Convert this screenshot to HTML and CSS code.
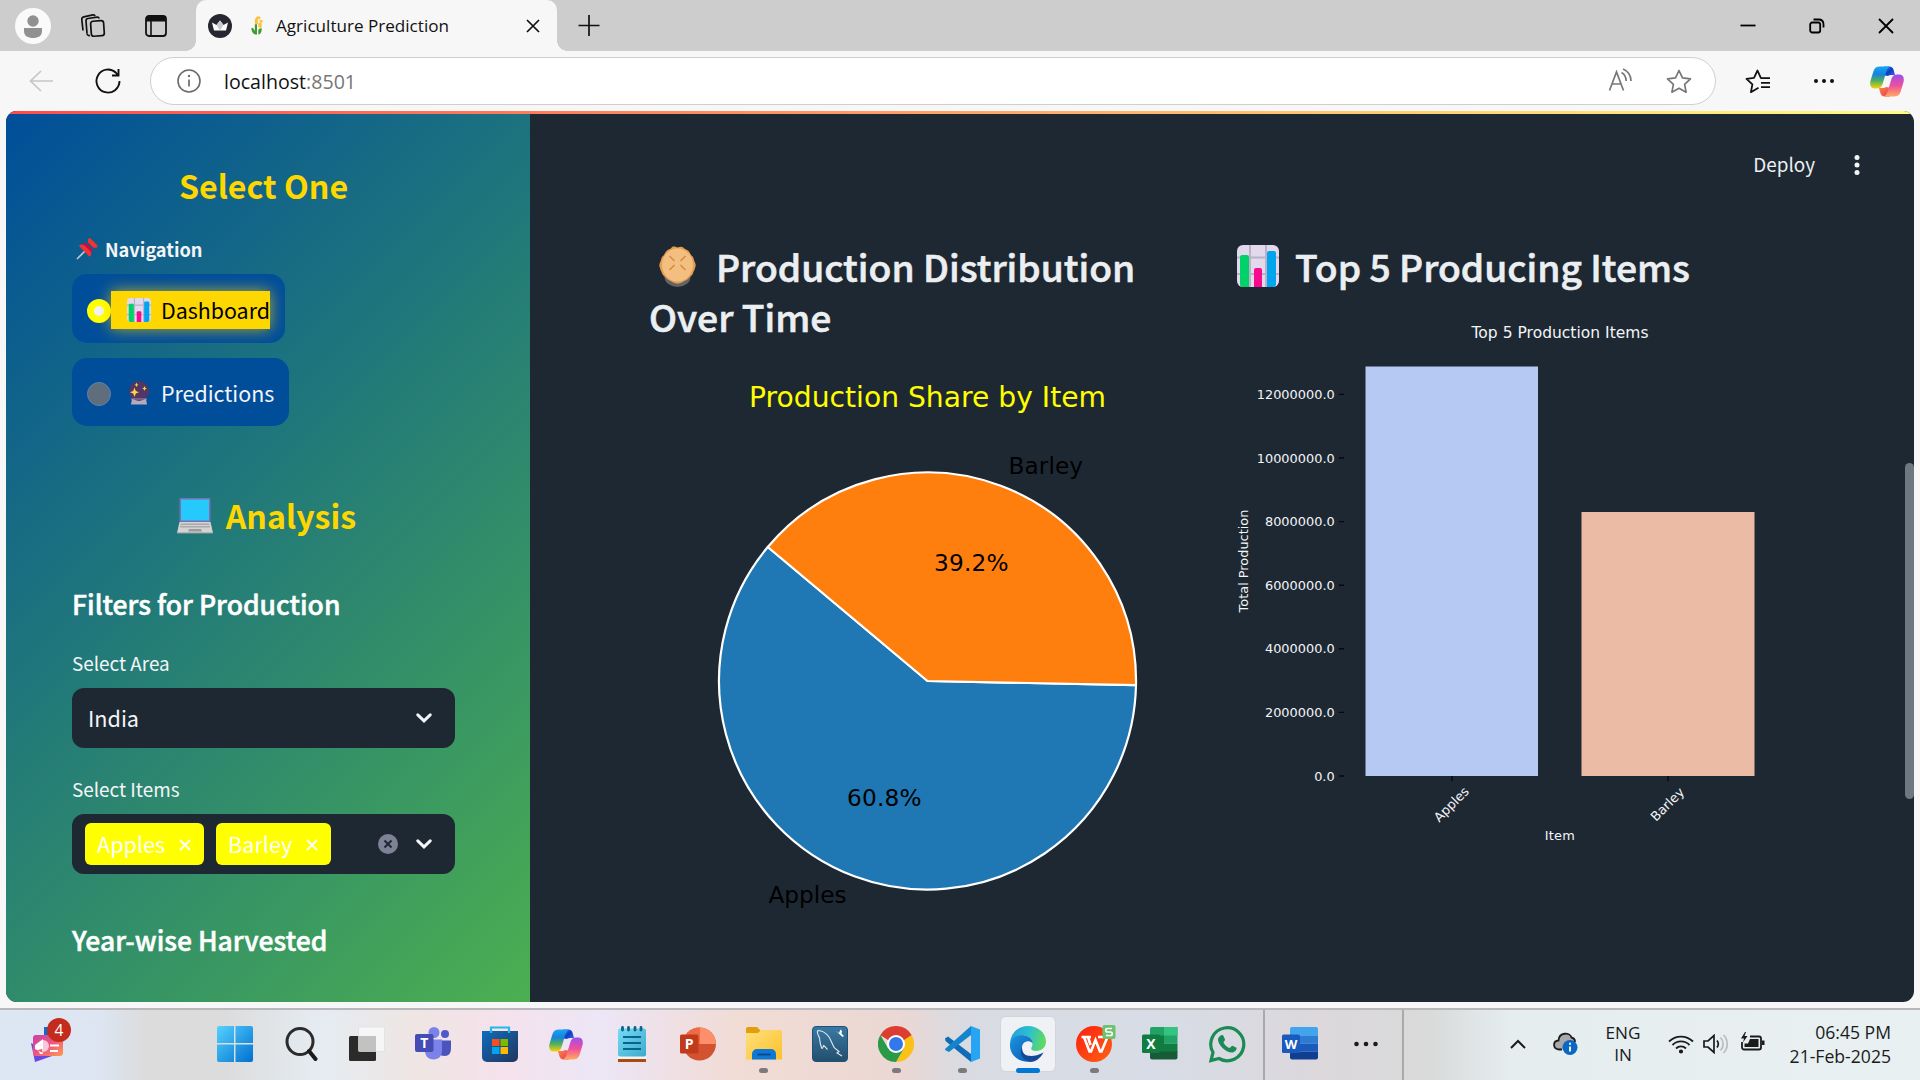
FILE: index.html
```html
<!DOCTYPE html>
<html lang="en">
<head>
<meta charset="utf-8">
<title>Agriculture Prediction</title>
<link rel="stylesheet" href="styles.css">
</head>
<body>
<svg class="defs" width="0" height="0" aria-hidden="true">
  <defs>
    <linearGradient id="cpA" x1="0" y1="0" x2="0" y2="1"><stop offset="0" stop-color="#18a4f5"/><stop offset=".35" stop-color="#1583dc"/><stop offset=".65" stop-color="#4fb05c"/><stop offset="1" stop-color="#fbd008"/></linearGradient>
    <linearGradient id="cpB" x1="0" y1="0" x2="0" y2="1"><stop offset="0" stop-color="#9a4ff0"/><stop offset=".5" stop-color="#ee4f9c"/><stop offset="1" stop-color="#ffab5c"/></linearGradient>
    <linearGradient id="cpC" x1="0" y1="0" x2="1" y2="1"><stop offset="0" stop-color="#1ba7ea"/><stop offset=".5" stop-color="#1239c4"/><stop offset="1" stop-color="#2f6fe6"/></linearGradient>
    <linearGradient id="cpD" x1="0" y1="0" x2="1" y2="1"><stop offset="0" stop-color="#ff8a3c"/><stop offset="1" stop-color="#e6355b"/></linearGradient>
    <symbol id="copilot" viewBox="0 0 34 30">
      <path fill="url(#cpC)" d="M14 0H19C22 0 23 1.200 23.800 4L25 8.500H22.500C20.500 8.500 19 8.500 18 9.500L15 9Z"/>
      <path fill="url(#cpD)" d="M20 30H15C12 30 11 28.800 10.200 26L9 21.500H11.500C13.500 21.500 15 21.500 16 20.500L19 21Z"/>
      <path fill="url(#cpA)" d="M10 0H20C18 1 17 3 16.200 5.500L12.600 17.500C11.600 20.800 9.800 22 6.500 22H5C1 22-.700 19 .600 14L3.500 4.500C4.600 1.200 6.500 0 10 0Z"/>
      <path fill="url(#cpB)" d="M24 30H14C16 29 17 27 17.800 24.500L21.400 12.500C22.400 9.200 24.200 8 27.500 8H29C33 8 34.700 11 33.400 16L30.500 25.500C29.400 28.800 27.500 30 24 30Z"/>
    </symbol>
    <symbol id="barchart" viewBox="0 0 42 42">
      <rect width="42" height="42" rx="6" fill="#e3d9ec"/>
      <path d="M13 0V42M29 0V42M0 12.500H42M0 29H42" stroke="#bbb1c8" stroke-width="2"/>
      <path d="M3 12a2 2 0 0 1 2-2h5a2 2 0 0 1 2 2V42H6a3 3 0 0 1-3-3Z" fill="#00d26a"/>
      <path d="M17 25a2 2 0 0 1 2-2h4a2 2 0 0 1 2 2V42H17Z" fill="#f70a8d"/>
      <path d="M30 8a2 2 0 0 1 2-2h5a2 2 0 0 1 2 2V39a3 3 0 0 1-3 3H30Z" fill="#00a6ed"/>
    </symbol>
  </defs>
</svg>

<header class="tabstrip">
  <svg class="profile" width="36" height="36" viewBox="0 0 36 36"><circle cx="18" cy="18" r="18" fill="#fafafa"/><circle cx="18" cy="13" r="5.700" fill="#919191"/><path d="M9 20h18v3c0 5-4 7-9 7s-9-2-9-7Z" fill="#919191"/></svg>
  <svg class="workspaces" width="26" height="26" viewBox="0 0 26 26" fill="none" stroke="#111" stroke-width="1.700"><rect x="11" y="8" width="13" height="15" rx="2.500" transform="rotate(-4 17 16)"/><path d="M7 20.500 6 8c-.1-1.500.6-2.300 2-2.500l9-1.300c1.200-.2 1.800.2 2.200 1.300"/><path d="M3 17.500 1.800 6.500c-.1-1.500.6-2.300 2-2.600l9-2c1.200-.2 2 .2 2.200 1.200M7 20.500c0 1.300 1.500 2.300 3 2"/></svg>
  <svg class="vtabs" width="22" height="22" viewBox="0 0 22 22"><rect x="1" y="1" width="20" height="20" rx="3" fill="none" stroke="#111" stroke-width="1.800"/><path d="M1 6.500V4a3 3 0 0 1 3-3h14a3 3 0 0 1 3 3v2.500Z" fill="#111"/><path d="M6 6v15" stroke="#111" stroke-width="1.600"/></svg>
  <div class="tab">
    <svg width="24" height="24" viewBox="0 0 24 24"><circle cx="12" cy="12" r="12" fill="#262730"/><path d="M4 8.500 8.500 11 12 6.500 15.500 11 20 8.500 18 16.500H6Z" fill="#fff"/><path d="M8.500 11 12 6.500 15.500 11 12 16.500Z" fill="#c9c9cf"/></svg>
    <svg class="corn" width="12" height="20" viewBox="0 0 14 22"><g fill="#f9c23c"><rect x="4.500" y="2" width="3.500" height="7" rx="1.500"/><rect x="8.500" y="7" width="4" height="6" rx="1.500"/><rect x="6" y="0" width="5" height="3" rx="1"/><rect x="10" y="4" width="3.500" height="3" rx="1"/></g><path d="M5 21C1 19 .500 16 .500 13c2 0 3.500 2 4 4V9H7v12ZM8.500 21v-5c.5-2 2.500-2.500 4-2.500C12.500 17 12 20 8.500 21Z" fill="#3f9a2f"/></svg>
    <span class="tab-title">Agriculture Prediction</span>
    <svg class="tab-close" width="14" height="14" viewBox="0 0 14 14"><path d="M1 1 13 13M13 1 1 13" stroke="#111" stroke-width="1.700"/></svg>
  </div>
  <svg class="newtab" width="22" height="22" viewBox="0 0 22 22"><path d="M11 0V21M.500 10.500H21.500" stroke="#111" stroke-width="1.700"/></svg>
  <div class="winbtns">
    <svg width="16" height="16" viewBox="0 0 16 16"><path d="M.500 7.500H15.500" stroke="#000" stroke-width="1.800"/></svg>
    <svg width="16" height="16" viewBox="0 0 16 16" fill="none" stroke="#000" stroke-width="1.800"><rect x="1.200" y="4.500" width="10" height="10" rx="2"/><path d="M4.500 1.500H9.500C13 1.500 14.500 3 14.500 6.500V9.500"/></svg>
    <svg width="16" height="16" viewBox="0 0 16 16"><path d="M1 1 15 15M15 1 1 15" stroke="#000" stroke-width="1.800"/></svg>
  </div>
</header>

<nav class="toolbar">
  <svg class="back" width="24" height="22" viewBox="0 0 24 22" fill="none" stroke="#c6c6c6" stroke-width="1.700"><path d="M12 1 1.500 11 12 21M1.500 11H24"/></svg>
  <svg class="reload" width="26" height="26" viewBox="0 0 26 26" fill="none" stroke="#111" stroke-width="1.900"><path d="M24.500 13A11.500 11.500 0 1 1 21 4.800L23 7.500M23.500 1V7.500H17"/></svg>
  <div class="address">
    <svg width="24" height="24" viewBox="0 0 24 24"><circle cx="12" cy="12" r="11" fill="none" stroke="#6b6b6b" stroke-width="1.600"/><path d="M12 10.500V17.500" stroke="#6b6b6b" stroke-width="1.700"/><circle cx="12" cy="7" r="1.200" fill="#6b6b6b"/></svg>
    <span class="url">localhost<span class="port">:8501</span></span>
    <svg class="read" width="24" height="24" viewBox="0 0 24 24" fill="none" stroke="#777" stroke-width="1.700"><path d="M1.500 22.500 8.500 4 15.500 22.500M4 16H13M13.500 4.500C16.500 6 18 9 18.200 13M15 1C20 3 22.800 7 23 13"/></svg>
    <svg class="star" width="26" height="25" viewBox="0 0 26 25"><path d="M13 1.500 16.500 8.800 24.500 9.800 18.600 15.300 20.100 23.200 13 19.300 5.900 23.200 7.400 15.300 1.500 9.800 9.500 8.800Z" fill="none" stroke="#777" stroke-width="1.700" stroke-linejoin="round"/></svg>
  </div>
  <svg class="favs" width="26" height="25" viewBox="0 0 26 25" fill="none" stroke="#111" stroke-width="1.800" stroke-linejoin="round"><path d="M16.500 8.800H15.800L12.500 1.500 9 8.800 1.500 9.800 7.400 15.300 5.900 23.200 13.500 18.800M16 9.200H25M16 13.800H25M16 18.200H25"/></svg>
  <svg class="more" width="20" height="6" viewBox="0 0 20 6" fill="#111"><circle cx="2" cy="3" r="2"/><circle cx="10" cy="3" r="2"/><circle cx="18" cy="3" r="2"/></svg>
  <svg class="copilot-btn" width="34" height="31"><use href="#copilot"/></svg>
</nav>

<div class="viewport">
  <div class="decoration"></div>
  <aside class="sidebar">
    <h1 class="side-title">Select One</h1>
    <div class="nav-label">
      <svg width="22" height="22" viewBox="0 0 22 22"><path d="M10 12 1 21" stroke="#c5cbd6" stroke-width="1.600"/><path d="M9.500 4.500 17 12 13 17 4.500 8.500Z" fill="#ca0b4a"/><path d="M12 1C13 0 14 0 15 1L21 7C22 8 21.500 9.500 20 9.800L17.500 9.800 12 4.500ZM3 8C3.500 6.500 6 6 8 7L14.500 13.500C15.500 16 15 18 13.500 18.700Z" fill="#f8312f"/></svg>
      <span>Navigation</span>
    </div>
    <div class="radio active">
      <span class="dot"></span>
      <span class="radio-text"><svg width="24" height="24"><use href="#barchart"/></svg>Dashboard</span>
    </div>
    <div class="radio">
      <span class="dot"></span>
      <span class="radio-text"><svg width="24" height="24" viewBox="0 0 24 24"><path d="M5 18H19L20 23.500H4Z" fill="#b4acbc"/><circle cx="12" cy="10" r="10" fill="#533566"/><path d="M4 18.500H20V17.500H4Z" fill="#998ea4"/><path d="M7.500 6.500 8.800 10 12 11.200 8.800 12.500 7.500 16 6.200 12.500 3 11.200 6.200 10ZM9.500 1.500 10.200 3.300 11.500 4 10.200 4.600 9.500 6 8.800 4.600 7.500 4 8.800 3.300ZM17.500 5 18.200 6.800 19.800 7.500 18.200 8.200 17.500 10 16.800 8.200 15.200 7.500 16.800 6.800Z" fill="#fcd53f"/></svg>Predictions</span>
    </div>
    <h1 class="side-title analysis">
      <svg width="36" height="36" viewBox="0 0 36 36"><rect x="2.500" y="0" width="31" height="24" rx="1" fill="#7d6fb5"/><rect x="4" y="1.500" width="28" height="21" fill="#26c9fc"/><path d="M2.500 24H33.500L36 35H0Z" fill="#d3d3d3"/><path d="M4 25.500H32L33 29.500H3Z" fill="#aaa"/><path d="M4 27.500H32" stroke="#d3d3d3"/><path d="M12 31H24L25 33.500H11Z" fill="#9b9b9b"/><path d="M0 34.500H36V35.500H0Z" fill="#999"/></svg>
      <span>Analysis</span>
    </h1>
    <h3 class="filters">Filters for Production</h3>
    <label class="field-label">Select Area</label>
    <div class="select">
      <span class="value">India</span>
      <svg class="chev" width="16" height="10" viewBox="0 0 16 10"><path d="M1.800 1.800 8 7.800 14.200 1.800" fill="none" stroke="#f3f5f7" stroke-width="3" stroke-linecap="round"/></svg>
    </div>
    <label class="field-label items">Select Items</label>
    <div class="select">
      <span class="tag">Apples<svg width="12" height="12" viewBox="0 0 12 12"><path d="M1 1 11 11M11 1 1 11" stroke="#fff" stroke-width="2"/></svg></span>
      <span class="tag">Barley<svg width="12" height="12" viewBox="0 0 12 12"><path d="M1 1 11 11M11 1 1 11" stroke="#fff" stroke-width="2"/></svg></span>
      <svg class="clear" width="20" height="20" viewBox="0 0 20 20"><circle cx="10" cy="10" r="10" fill="#7f8297"/><path d="M6.500 6.500 13.500 13.500M13.500 6.500 6.500 13.500" stroke="#1e2833" stroke-width="2"/></svg>
      <svg class="chev" width="16" height="10" viewBox="0 0 16 10"><path d="M1.800 1.800 8 7.800 14.200 1.800" fill="none" stroke="#f3f5f7" stroke-width="3" stroke-linecap="round"/></svg>
    </div>
    <h3 class="year">Year-wise Harvested</h3>
  </aside>

  <main class="main">
    <div class="app-header">
      <span>Deploy</span>
      <svg width="6" height="20" viewBox="0 0 6 20" fill="#f3f5f7"><circle cx="3" cy="2.500" r="2.500"/><circle cx="3" cy="10" r="2.500"/><circle cx="3" cy="17.500" r="2.500"/></svg>
    </div>
    <div class="columns">
      <section>
        <h2><svg class="cookie" width="37" height="41" viewBox="0 0 37 41"><ellipse cx="18.500" cy="31" rx="13" ry="10" fill="#636363"/><path d="M13 1C15 0 17 1 18.500 1.500 20 1 22 0 24 1.200 25 3 27 3 29 4.500 31 6 31 8 32.500 9.500 35 11 34.500 13 35.500 15.500 37 18 37 20 36 22 36 24 34.500 25 34 27.500 33 30 30 31 29 33 27 35 25 34.500 23 36.500 20 38 17 38 14 36.500 12 34.500 10 35 8 33 7 31 4 30 3 27.500 2.500 25 1 24 1 22 0 20 0 18 1.500 15.500 2.500 13 2 11 4.500 9.500 6 8 6 6 8 4.500 10 3 12 3 13 1Z" fill="#e39d4f"/><ellipse cx="18.500" cy="19" rx="15.500" ry="16.500" fill="#f3bf80"/><path d="M10.500 10 15.500 15M26.500 10 21.500 15M10.500 24 15.500 19M26.500 24 21.500 19" stroke="#d98c3f" stroke-width="1.600"/></svg>Production Distribution<br>Over Time</h2>
        <svg class="chart" width="520" height="560" viewBox="650 360 520 560">
          <text class="pie-title" x="927.500" y="407" text-anchor="middle" textLength="357">Production Share by Item</text>
          <g stroke="#fff" stroke-width="2.200" stroke-linejoin="round">
            <path fill="#1f77b4" d="M927.500 681 767.800 547A208.500 208.500 0 1 0 1136 685.100Z"/>
            <path fill="#ff7f0e" d="M927.500 681 1136 685.100A208.500 208.500 0 0 0 767.800 547Z"/>
          </g>
          <g class="pie-label">
            <text x="1008.500" y="474" textLength="74.500">Barley</text>
            <text x="768.500" y="903" textLength="78">Apples</text>
            <text x="934" y="571" textLength="74.500">39.2%</text>
            <text x="847" y="805.500" textLength="74.500">60.8%</text>
          </g>
        </svg>
      </section>
      <section>
        <h2><svg width="42" height="42"><use href="#barchart"/></svg>Top 5 Producing Items</h2>
        <svg class="chart bars" width="540" height="540" viewBox="1230 310 540 540">
          <text class="bar-title" x="1560" y="338" text-anchor="middle" textLength="177">Top 5 Production Items</text>
          <rect x="1365.500" y="366.500" width="172.500" height="409.500" fill="#b5c9f3"/>
          <rect x="1581.500" y="512" width="173" height="264" fill="#ecbba5"/>
          <path d="M1339 776h5M1339 712.400h5M1339 648.800h5M1339 585.200h5M1339 521.600h5M1339 458h5M1339 394.400h5M1452 776v5M1668 776v5" stroke="#05080b" stroke-width="1.400"/>
          <g class="tick" text-anchor="end">
            <text x="1334.700" y="780.500">0.0</text><text x="1334.700" y="717">2000000.0</text><text x="1334.700" y="653.400">4000000.0</text><text x="1334.700" y="589.800">6000000.0</text><text x="1334.700" y="526.200">8000000.0</text><text x="1334.700" y="462.600">10000000.0</text><text x="1334.700" y="399">12000000.0</text>
          </g>
          <g class="tick" text-anchor="middle">
            <text transform="translate(1454.500 807.500) rotate(-45)">Apples</text>
            <text transform="translate(1670.500 807.500) rotate(-45)">Barley</text>
            <text x="1559.700" y="839.500" textLength="30">Item</text>
            <text transform="translate(1248 561) rotate(-90)">Total Production</text>
          </g>
        </svg>
      </section>
    </div>
    <div class="scrollbar"></div>
  </main>
</div>

<footer class="taskbar">
  <div class="cell news"><svg width="36" height="38" viewBox="0 0 36 38"><path d="M2 18 6 37 26 30Z" fill="#6a48e0"/><rect x="15" y="2" width="14" height="20" fill="#1269c7"/><defs><linearGradient id="nw" x1="0" y1="0" x2="1" y2="1"><stop offset="0" stop-color="#c542a6"/><stop offset=".5" stop-color="#f0557f"/><stop offset="1" stop-color="#ff9a52"/></linearGradient></defs><rect x="4" y="10" width="30" height="21" rx="3" fill="url(#nw)"/><path d="M6 20 14 14V28L6 24ZM9 25 11 29H14L13 24Z" fill="#fff"/><path d="M14 15a6 6 0 0 1 0 12Z" fill="#f9c6da"/><path d="M21 20.500H30M21 26H29" stroke="#fff" stroke-width="2"/></svg><span class="badge">4</span></div>
  <div class="apps">
    <div class="cell"><svg width="36" height="36" viewBox="0 0 36 36"><defs><linearGradient id="wn" x1="0" y1="0" x2="1" y2="1"><stop offset="0" stop-color="#56d2ff"/><stop offset="1" stop-color="#0070cf"/></linearGradient></defs><path fill="url(#wn)" d="M2 0H17V17H0V2a2 2 0 0 1 2-2ZM18.500 0H34a2 2 0 0 1 2 2V17H18.500ZM0 18.500H17V36H2a2 2 0 0 1-2-2ZM18.500 18.500H36V34a2 2 0 0 1-2 2H18.500Z"/></svg></div>
    <div class="cell"><svg width="34" height="36" viewBox="0 0 34 36"><circle cx="16" cy="15.500" r="13" fill="none" stroke="#2b2b2b" stroke-width="3"/><path d="M25 25 31.500 33" stroke="#1b1b1b" stroke-width="4" stroke-linecap="round"/></svg></div>
    <div class="cell"><svg width="36" height="36" viewBox="0 0 36 36"><rect x="0" y="10" width="27" height="25" rx="1.500" fill="#2b2b2a"/><rect x="9.500" y="1" width="26" height="24.500" rx="1.500" fill="#f6f6f6" stroke="#dcdcdc" stroke-width=".6"/><rect x="9.500" y="10" width="17.500" height="15.500" fill="#c2c2c2"/></svg></div>
    <div class="cell"><svg width="36" height="36" viewBox="0 0 36 36"><circle cx="30" cy="8" r="4" fill="#5059c9"/><path d="M22 14.500H36V22c0 5-2 8-6.500 8S22 27 22 22Z" fill="#4b53bc"/><circle cx="19" cy="6.500" r="5.500" fill="#7b83eb"/><path d="M10 13.500H27V24c0 6-3 9.500-8.500 9.500S10 30 10 24Z" fill="#7b83eb"/><rect x="0" y="8" width="18.500" height="18" rx="2" fill="#454cb5"/><text class="glyph" x="9.200" y="22" font-size="14">T</text></svg></div>
    <div class="cell"><svg width="36" height="36" viewBox="0 0 36 36"><defs><linearGradient id="st" x1="0" y1="0" x2="1" y2="1"><stop offset="0" stop-color="#0f6cbd"/><stop offset="1" stop-color="#22355c"/></linearGradient></defs><path d="M0 5H36V31a5 5 0 0 1-5 5H5a5 5 0 0 1-5-5Z" fill="url(#st)"/><path d="M9 7V1.500H27V7" fill="none" stroke="#22b8ee" stroke-width="2.200"/><path d="M10 13h7.500v7H10Z" fill="#f25022"/><path d="M18.500 13H26v7h-7.500Z" fill="#7fba00"/><path d="M10 21h7.500v7H10Z" fill="#00a4ef"/><path d="M18.500 21H26v7h-7.500Z" fill="#ffb900"/></svg></div>
    <div class="cell"><svg width="34" height="31"><use href="#copilot"/></svg></div>
    <div class="cell"><svg width="28" height="36" viewBox="0 0 28 36"><path d="M0 30H28V36H0Z" fill="#ad4b0e"/><path d="M0 30H28V33H0Z" fill="#f0f4f6"/><defs><linearGradient id="np" x1="0" y1="0" x2="1" y2="1"><stop offset="0" stop-color="#77dcf5"/><stop offset="1" stop-color="#3da9cb"/></linearGradient></defs><rect y="2.500" width="28" height="28" rx="2" fill="url(#np)"/><path d="M5 11H23M5 17H23M5 23H23" stroke="#07648c" stroke-width="2"/><path d="M4.500 1.500V4M10.500 1.500V4M17 1.500V4M23 1.500V4" stroke="#07648c" stroke-width="2.800" stroke-linecap="round"/></svg></div>
    <div class="cell"><svg width="36" height="34" viewBox="0 0 36 34"><circle cx="19.500" cy="17" r="16.500" fill="#d35230"/><path d="M19.500 17V.500A16.500 16.500 0 0 1 36 17Z" fill="#ff8f6b"/><path d="M19.500.500V17H3A16.500 16.500 0 0 1 19.500.500Z" fill="#ed6c47"/><rect y="7.500" width="18.500" height="19" rx="1.500" fill="#c13b1b"/><text class="glyph" x="9.200" y="22" font-size="14">P</text></svg></div>
    <div class="cell running"><svg width="36" height="34" viewBox="0 0 36 34"><path d="M0 2a2 2 0 0 1 2-2H11L15 4V10H0Z" fill="#dfa00a"/><defs><linearGradient id="fd" x1="0" y1="0" x2="1" y2="1"><stop offset="0" stop-color="#ffe07a"/><stop offset="1" stop-color="#fcc02c"/></linearGradient></defs><path d="M0 6H12L15 3H34a2 2 0 0 1 2 2V32.500H0Z" fill="url(#fd)"/><path d="M6 32.500V27a5 5 0 0 1 5-5H25a5 5 0 0 1 5 5V32.500Z" fill="#0f78d4"/><path d="M11.500 27.500H24.500" stroke="#0a4a8c" stroke-width="2"/></svg></div>
    <div class="cell"><svg width="36" height="36" viewBox="0 0 36 36"><defs><linearGradient id="my" x1="0" y1="0" x2="0" y2="1"><stop offset="0" stop-color="#3a79a4"/><stop offset="1" stop-color="#234e6c"/></linearGradient></defs><rect x=".500" y=".500" width="35" height="35" rx="3.500" fill="url(#my)" stroke="#1f5274"/><path d="M6 4.500C10 4.500 14 7 17 11 19 14 20 18 22.500 22L27 25.500 25 27 30 30M6 4.500C4 6 6.500 9 7.500 12 8 15 8 18 9.500 21.500 10 23.500 11 22 11.500 19.500 13 20 14 22 15.500 23.500" fill="none" stroke="#dfe9f0" stroke-width="1.100"/><path d="M24 5 27 7 28.500 3.500 30 5 29.500 7.500 32 10 30.500 11Z" fill="#fff"/></svg></div>
    <div class="cell running"><svg width="36" height="36" viewBox="0 0 36 36"><path d="M18 18 2.400 9A18 18 0 0 1 33.600 9Z" fill="#dd3c30"/><path d="M33.600 9A18 18 0 0 1 18 36L25.800 22.500 18 9Z" fill="#fbc116"/><path d="M2.400 9A18 18 0 0 0 18 36L25.800 22.500H10.200Z" fill="#289a48"/><path d="M2.400 9H33.600L26 14H10Z" fill="#dd3c30"/><circle cx="18" cy="18" r="9" fill="#fff"/><circle cx="18" cy="18" r="7" fill="#3278ea"/></svg></div>
    <div class="cell running"><svg width="36" height="36" viewBox="0 0 36 36"><path d="M1 12.500 4 10.500 27 28V36L1.500 15Z" fill="#0f6cb5"/><path d="M1.500 22.500 27 0V9L5 26 1 24Z" fill="#1484ce"/><path d="M27 0 36 3.500V32.500L27 36Z" fill="#27a5f2"/></svg></div>
    <div class="cell running current"><svg width="36" height="36" viewBox="0 0 36 36"><defs><linearGradient id="e1" x1="0" y1=".3" x2="1" y2=".5"><stop offset="0" stop-color="#239fd8"/><stop offset=".5" stop-color="#2bc1cf"/><stop offset="1" stop-color="#62db5d"/></linearGradient><linearGradient id="e2" x1="0" y1="0" x2="1" y2="1"><stop offset="0" stop-color="#1a95e2"/><stop offset="1" stop-color="#0c56ab"/></linearGradient></defs><path d="M0 17C1 7 8 0 18 0 28 0 36 7 36 15.500 36 21 32 25 26 25 22 25 20.500 23 21.500 21.500 24 18 22 10 13 9 7 9 2 12 0 17Z" fill="url(#e1)"/><path d="M0 18C1 11 7 9 12 9 18 9 23 13 22.500 18 22 14 12 14 12 22 12 29 18 35 25 34.500 14 39-1 32 0 18Z" fill="url(#e2)"/><path d="M12 21C11 30 21 33 33.500 26.500 30 33 25 36 20 36 12 33 9 27 12 21Z" fill="#124a98"/></svg></div>
    <div class="cell running"><svg class="wps" width="40" height="40" viewBox="0 0 40 40"><defs><linearGradient id="wp" x1="0" y1="0" x2="1" y2="1"><stop offset="0" stop-color="#fb1f12"/><stop offset="1" stop-color="#ff6212"/></linearGradient></defs><circle cx="18" cy="22" r="18" fill="url(#wp)"/><path d="M5.500 15H15M8 15 13.500 29.500H15L19.500 18 24 29.500H25.500L31.500 15H22M12 15 14.500 23" fill="none" stroke="#fff" stroke-width="2.600"/><rect x="26.500" y="3" width="13" height="14" rx="2" fill="#6cc26e"/><path d="M36 6.500H31.500A1.500 1.500 0 0 0 31.500 10H34.500A1.500 1.500 0 0 1 34.500 13.500H30" fill="none" stroke="#fff" stroke-width="1.700"/></svg></div>
    <div class="cell"><svg width="36" height="34" viewBox="0 0 36 34"><path d="M8 2a2 2 0 0 1 2-2H35.500V16.500H8Z" fill="#21a366"/><path d="M22 0H33.500a2 2 0 0 1 2 2V8.500H22Z" fill="#33c481"/><path d="M8 8.500H22V25H8Z" fill="#107c41"/><path d="M22 16.500H35.500V25H22Z" fill="#107c41"/><path d="M8 24.500H35.500V30.500a2 2 0 0 1-2 2H10a2 2 0 0 1-2-2Z" fill="#185c37"/><rect y="7.500" width="18" height="18.500" rx="1.500" fill="#107c41"/><text class="glyph" x="9" y="22" font-size="14">X</text></svg></div>
    <div class="cell"><svg width="38" height="38" viewBox="0 0 38 38"><path d="M3 35.500 5 27.500A16.500 16.500 0 1 1 11 33.500Z" fill="none" stroke="#1c8a54" stroke-width="3.200"/><path d="M12 11C13.500 9.500 15 10 15.500 11L17 14.500C17 16 15.500 16.500 15.500 17.500 17 20.500 19 22 21.500 23 22.500 23 23.500 20.800 24.500 20.800L28.500 22.800C29 25 27 27 24.500 27.500 18 28 10 20 10 14.500 10 13 11 12 12 11Z" fill="#1c8a54"/></svg></div>
  </div>
  <div class="pinned">
    <svg width="36" height="34" viewBox="0 0 36 34"><path d="M8 2a2 2 0 0 1 2-2H34a2 2 0 0 1 2 2V8.500H8Z" fill="#41a5ee"/><path d="M8 8.500H36V16.500H8Z" fill="#2b7cd3"/><path d="M8 16.500H36V24.500H8Z" fill="#185abd"/><path d="M8 24.500H36V30.500a2 2 0 0 1-2 2H10a2 2 0 0 1-2-2Z" fill="#103f91"/><rect y="7.500" width="18" height="18.500" rx="1.500" fill="#185abd"/><text class="glyph" x="9" y="21.500" font-size="13">W</text></svg>
    <svg width="24" height="6" viewBox="0 0 24 6" fill="#1b1b1b"><circle cx="2.500" cy="3" r="2.300"/><circle cx="12" cy="3" r="2.300"/><circle cx="21.500" cy="3" r="2.300"/></svg>
  </div>
  <div class="tray">
    <svg class="caret" width="16" height="10" viewBox="0 0 16 10"><path d="M1 9 8 2 15 9" fill="none" stroke="#1b1b1b" stroke-width="2"/></svg>
    <svg class="cloud" width="25" height="24" viewBox="0 0 25 24"><path d="M9 17.500H6C-.500 17-.500 9 5.500 8.500 6 0 17 0 18.500 5.500 21 6 22 8 22 10" fill="#a9a9a9"/><path d="M9 17.500H6C-.500 17-.500 9 5.500 8.500 6 0 17 0 18.500 5.500 21 6 22 8 22 10" fill="none" stroke="#1b1b1b" stroke-width="1.800"/><circle cx="17" cy="15.500" r="7.500" fill="#0a67c2"/><path d="M17 14.500v5M17 10.800v2" stroke="#fff" stroke-width="1.800"/></svg>
    <div class="lang">ENG<br>IN</div>
    <svg class="wifi" width="26" height="20" viewBox="0 0 26 20" fill="none" stroke="#1b1b1b" stroke-width="1.800"><path d="M1 7.500A17 17 0 0 1 25 7.500M4.500 11A12 12 0 0 1 21.500 11M8 14.500A7 7 0 0 1 18 14.500"/><circle cx="13" cy="17.500" r="1.200" fill="#1b1b1b"/></svg>
    <svg class="sound" width="26" height="20" viewBox="0 0 26 20" fill="none" stroke="#1b1b1b" stroke-width="1.700"><path d="M1 7H5L11 1.500V18.500L5 13H1ZM14 6.500C15.500 8.500 15.500 11.500 14 13.500"/><path d="M17.500 3.500C21 7 21 13 17.500 16.500M20.500 1C25.500 6 25.500 14 20.500 19" stroke="#b9bdbf"/></svg>
    <svg class="batt" width="25" height="20" viewBox="0 0 25 20"><path d="M10 4.500H19a2 2 0 0 1 2 2v9a2 2 0 0 1-2 2H4a2 2 0 0 1-2-2V10" fill="none" stroke="#1b1b1b" stroke-width="1.800"/><path d="M22 8.500H24.500V13H22Z" fill="#1b1b1b"/><path d="M10 7H18.500V15H4.500V11.500H8Z" fill="#1b1b1b"/><path d="M5 0 1 6.500H4L3 10.500 7.500 4H4.500L6 0Z" fill="#1b1b1b"/></svg>
    <div class="clock">06:45 PM<br>21-Feb-2025</div>
  </div>
</footer>
</body>
</html>
```
FILE: styles.css
```css
* { box-sizing: border-box; }
body {
  margin: 0;
  width: 1920px;
  height: 1080px;
  overflow: hidden;
  display: flex;
  flex-direction: column;
  background: #f7f7f7;
  font-family: "Noto Sans CJK JP", "Noto Sans", sans-serif;
}
svg { display: block; flex: none; }
h1, h2, h3 { margin: 0; }
.defs { position: absolute; }

/* Browser tab strip */
.tabstrip {
  flex: none;
  height: 51px;
  display: flex;
  align-items: center;
  background: #cdcdcd;
  font-family: "Open Sans", sans-serif;
}
.profile { margin-left: 15px; }
.workspaces { margin-left: 29px; }
.vtabs { margin-left: 39px; }
.tab {
  position: relative;
  align-self: stretch;
  width: 361px;
  margin-left: 29px;
  padding: 0 17px 0 12px;
  display: flex;
  align-items: center;
  background: #f7f7f7;
  border-radius: 10px 10px 0 0;
}
.tab::before, .tab::after {
  content: "";
  position: absolute;
  bottom: 0;
  width: 10px;
  height: 10px;
}
.tab::before { left: -10px; background: radial-gradient(circle at 0 0, transparent 9.500px, #f7f7f7 10px); }
.tab::after { right: -10px; background: radial-gradient(circle at 100% 0, transparent 9.500px, #f7f7f7 10px); }
.corn { margin-left: 19px; }
.tab-title { margin-left: 13px; font-size: 17.100px; color: #111; white-space: nowrap; }
.tab-close { margin-left: auto; }
.newtab { margin-left: 21px; }
.winbtns { margin-left: auto; margin-right: 26px; display: flex; gap: 53px; }

/* Browser toolbar */
.toolbar {
  flex: none;
  height: 60px;
  display: flex;
  align-items: center;
  font-family: "Open Sans", sans-serif;
}
.back { margin-left: 29px; }
.reload { margin-left: 42px; }
.address {
  width: 1566px;
  height: 48px;
  margin-left: 29px;
  padding: 0 23px 0 26px;
  display: flex;
  align-items: center;
  background: #fff;
  border: 1px solid #cfcfcf;
  border-radius: 24px;
}
.url { margin-left: 23px; font-size: 19.600px; color: #111; }
.port { color: #767676; }
.read { margin-left: auto; margin-top: -3px; }
.star { margin-left: 34px; }
.favs { margin-left: 29px; }
.more { margin-left: 43px; }
.copilot-btn { margin-left: 36px; }

/* Page */
.viewport {
  flex: none;
  position: relative;
  height: 891px;
  margin: 0 6px;
  display: flex;
  overflow: hidden;
  background: #1e2833;
  border-radius: 11px;
}
.decoration {
  position: absolute;
  inset: 0 0 auto;
  height: 3px;
  background: linear-gradient(90deg, #ff4b4b, #fffd80);
}
.sidebar {
  flex: none;
  width: 524px;
  padding: 53px 75px 0 66px;
  background: linear-gradient(135deg, #004e9a, #4caf50);
  color: #f3f5f7;
}
.side-title {
  height: 43px;
  font-size: 32.200px;
  line-height: 43px;
  text-align: center;
  color: #ffd700;
}
.nav-label {
  height: 32px;
  margin-top: 26px;
  padding-left: 4px;
  display: flex;
  align-items: center;
  gap: 7px;
  font-size: 18.200px;
  font-weight: 700;
  line-height: 32px;
}
.radio {
  width: max-content;
  height: 69px;
  margin-top: 9px;
  padding: 17px 15px 0;
  display: flex;
  background: #004e9a;
  border-radius: 15px;
}
.radio + .radio { height: 68px; margin-top: 15px; padding-top: 16px; }
.dot {
  width: 24px;
  height: 24px;
  margin-top: 8px;
  background: #5f6d7c;
  border: 1.500px solid #5a83b0;
  border-radius: 50%;
}
.radio.active .dot {
  background: #f0f2f6;
  border: 7.500px solid #ff0;
}
.radio-text {
  height: 38px;
  padding-left: 16px;
  display: flex;
  align-items: center;
  gap: 10px;
  font-size: 21.400px;
  line-height: 36px;
}
.radio.active .radio-text {
  height: 38px;
  background: #ffd700;
  box-shadow: 0 0 15px rgba(255, 215, 0, .7);
  color: #000;
}
.radio.active .radio-text { padding-bottom: 1px; }
.radio-text { padding-bottom: 1px; }
.analysis {
  margin-top: 68px;
  padding-left: 6px;
  display: flex;
  justify-content: center;
  gap: 13px;
}
.analysis svg { margin-top: 4px; }
.filters, .year {
  height: 36px;
  font-size: 26.500px;
  font-weight: 500;
  -webkit-text-stroke: .5px #fff;
  line-height: 36px;
  color: #fff;
}
.filters { margin-top: 49px; }
.field-label {
  display: block;
  height: 32px;
  margin-top: 25px;
  font-size: 18.900px;
  line-height: 32px;
}
.select {
  height: 60px;
  margin-top: 9px;
  padding: 0 23px 0 13px;
  display: flex;
  align-items: center;
  background: #1e2833;
  border-radius: 12px;
}
.value { padding-left: 3px; font-size: 21.600px; line-height: 58px; }
.chev { margin-left: auto; }
.tag {
  height: 42px;
  margin-right: 12px;
  padding: 0 13px 0 12px;
  display: flex;
  align-items: center;
  gap: 14px;
  background: #ff0;
  border-radius: 6px;
  color: #fff;
  font-size: 21.600px;
  line-height: 42px;
}
.tag svg { margin-top: 2px; }
.clear { margin-left: auto; }
.clear + .chev { margin-left: 18px; }
.year { margin-top: 48px; }

.main { position: relative; flex: 1; color: #eceff1; }
.app-header {
  height: 130px;
  padding: 38px 54px 0 0;
  display: flex;
  justify-content: flex-end;
  gap: 39px;
  font-size: 18.900px;
  line-height: 30px;
}
.app-header svg { margin-top: 6px; }
.columns {
  padding-left: 119px;
  display: grid;
  grid-template-columns: 580px 1fr;
}
h2 {
  display: block;
  font-size: 37.200px;
  font-weight: 500;
  -webkit-text-stroke: .6px #eceff1;
  line-height: 50.400px;
  white-space: nowrap;
}
h2 svg { display: inline-block; margin: 0 16px 0 8px; vertical-align: -5px; }
h2 .cookie { margin: 0 20px 0 10px; }
.chart { margin: 18px 0 0 1px; }
.chart.bars { margin: 19px 0 0 1px; }
.chart text { font-family: "DejaVu Sans", sans-serif; }
.pie-title { font-size: 28.200px; fill: #ff0; }
.pie-label { font-size: 23.200px; fill: #000; }
.bar-title { font-size: 15.500px; fill: #f3f5f7; }
.tick { font-size: 12.900px; fill: #f3f5f7; }
.scrollbar {
  position: absolute;
  top: 352px;
  right: 0;
  width: 9px;
  height: 336px;
  background: #6f777f;
  border-radius: 5px;
}

/* Windows taskbar */
.taskbar {
  flex: none;
  height: 72px;
  margin-top: 6px;
  display: flex;
  border-top: 2px solid #b8b8bc;
  background: linear-gradient(90deg, #dde6f3 0, #dce5f1 100px, #dcdcdd 145px, #dcdcdd 225px, #e5ecf1 320px, #efe5e3 420px, #f5e2ec 500px, #ece6f6 600px, #efdfe2 680px, #f1dcd5 740px, #ebd7d3 900px, #d9dbe1 960px, #d7dce6 1150px, #dcd8dc 1320px, #d9dada 1430px, #e5edef 1510px, #e8f0f2 1920px);
  color: #1b1b1b;
  font-family: "Open Sans", sans-serif;
}
.cell {
  position: relative;
  width: 66.100px;
  height: 70px;
  padding-bottom: 2px;
  display: flex;
  align-items: center;
  justify-content: center;
}
.news { margin-left: 14px; }
.badge {
  position: absolute;
  left: 33px;
  top: 8px;
  width: 24px;
  height: 24px;
  border-radius: 50%;
  background: #c42b1c;
  color: #fff;
  font-size: 15.500px;
  line-height: 24px;
  text-align: center;
}
.apps { margin-left: 122px; display: flex; }
.apps .cell svg { position: relative; z-index: 1; }
.apps .wps { margin: 0 -4px 4px 0; }
.glyph { font-family: "Open Sans", sans-serif; font-weight: 700; fill: #fff; text-anchor: middle; }
.running::after {
  content: "";
  position: absolute;
  z-index: 1;
  left: 28.500px;
  bottom: 7px;
  width: 9px;
  height: 5px;
  border-radius: 3px;
  background: #7c7a7c;
}
.current::before {
  content: "";
  position: absolute;
  inset: 6px 5px 8px;
  background: #eff1f5;
  border: 1px solid #d2d5dc;
  border-radius: 6px;
}
.current::after { left: 21px; width: 24px; background: #0078d4; }
.pinned {
  width: 141px;
  margin-left: 3px;
  padding: 0 24px 2px 17px;
  display: flex;
  align-items: center;
  justify-content: space-between;
  border: solid #a9a9ac;
  border-width: 0 2px;
}
.tray { flex: 1; display: flex; align-items: center; justify-content: flex-end; padding: 0 29px 2px 0; }
.lang { width: 40px; margin: 0 25px 0 25px; text-align: center; font-size: 17.200px; line-height: 22.500px; }
.caret { margin-right: 27px; }
.sound { margin-left: 9px; }
.batt { margin-left: 11px; margin-top: -4px; }
.clock { width: 104px; margin-left: 22px; text-align: right; font-size: 17.600px; line-height: 24px; white-space: nowrap; }
```
